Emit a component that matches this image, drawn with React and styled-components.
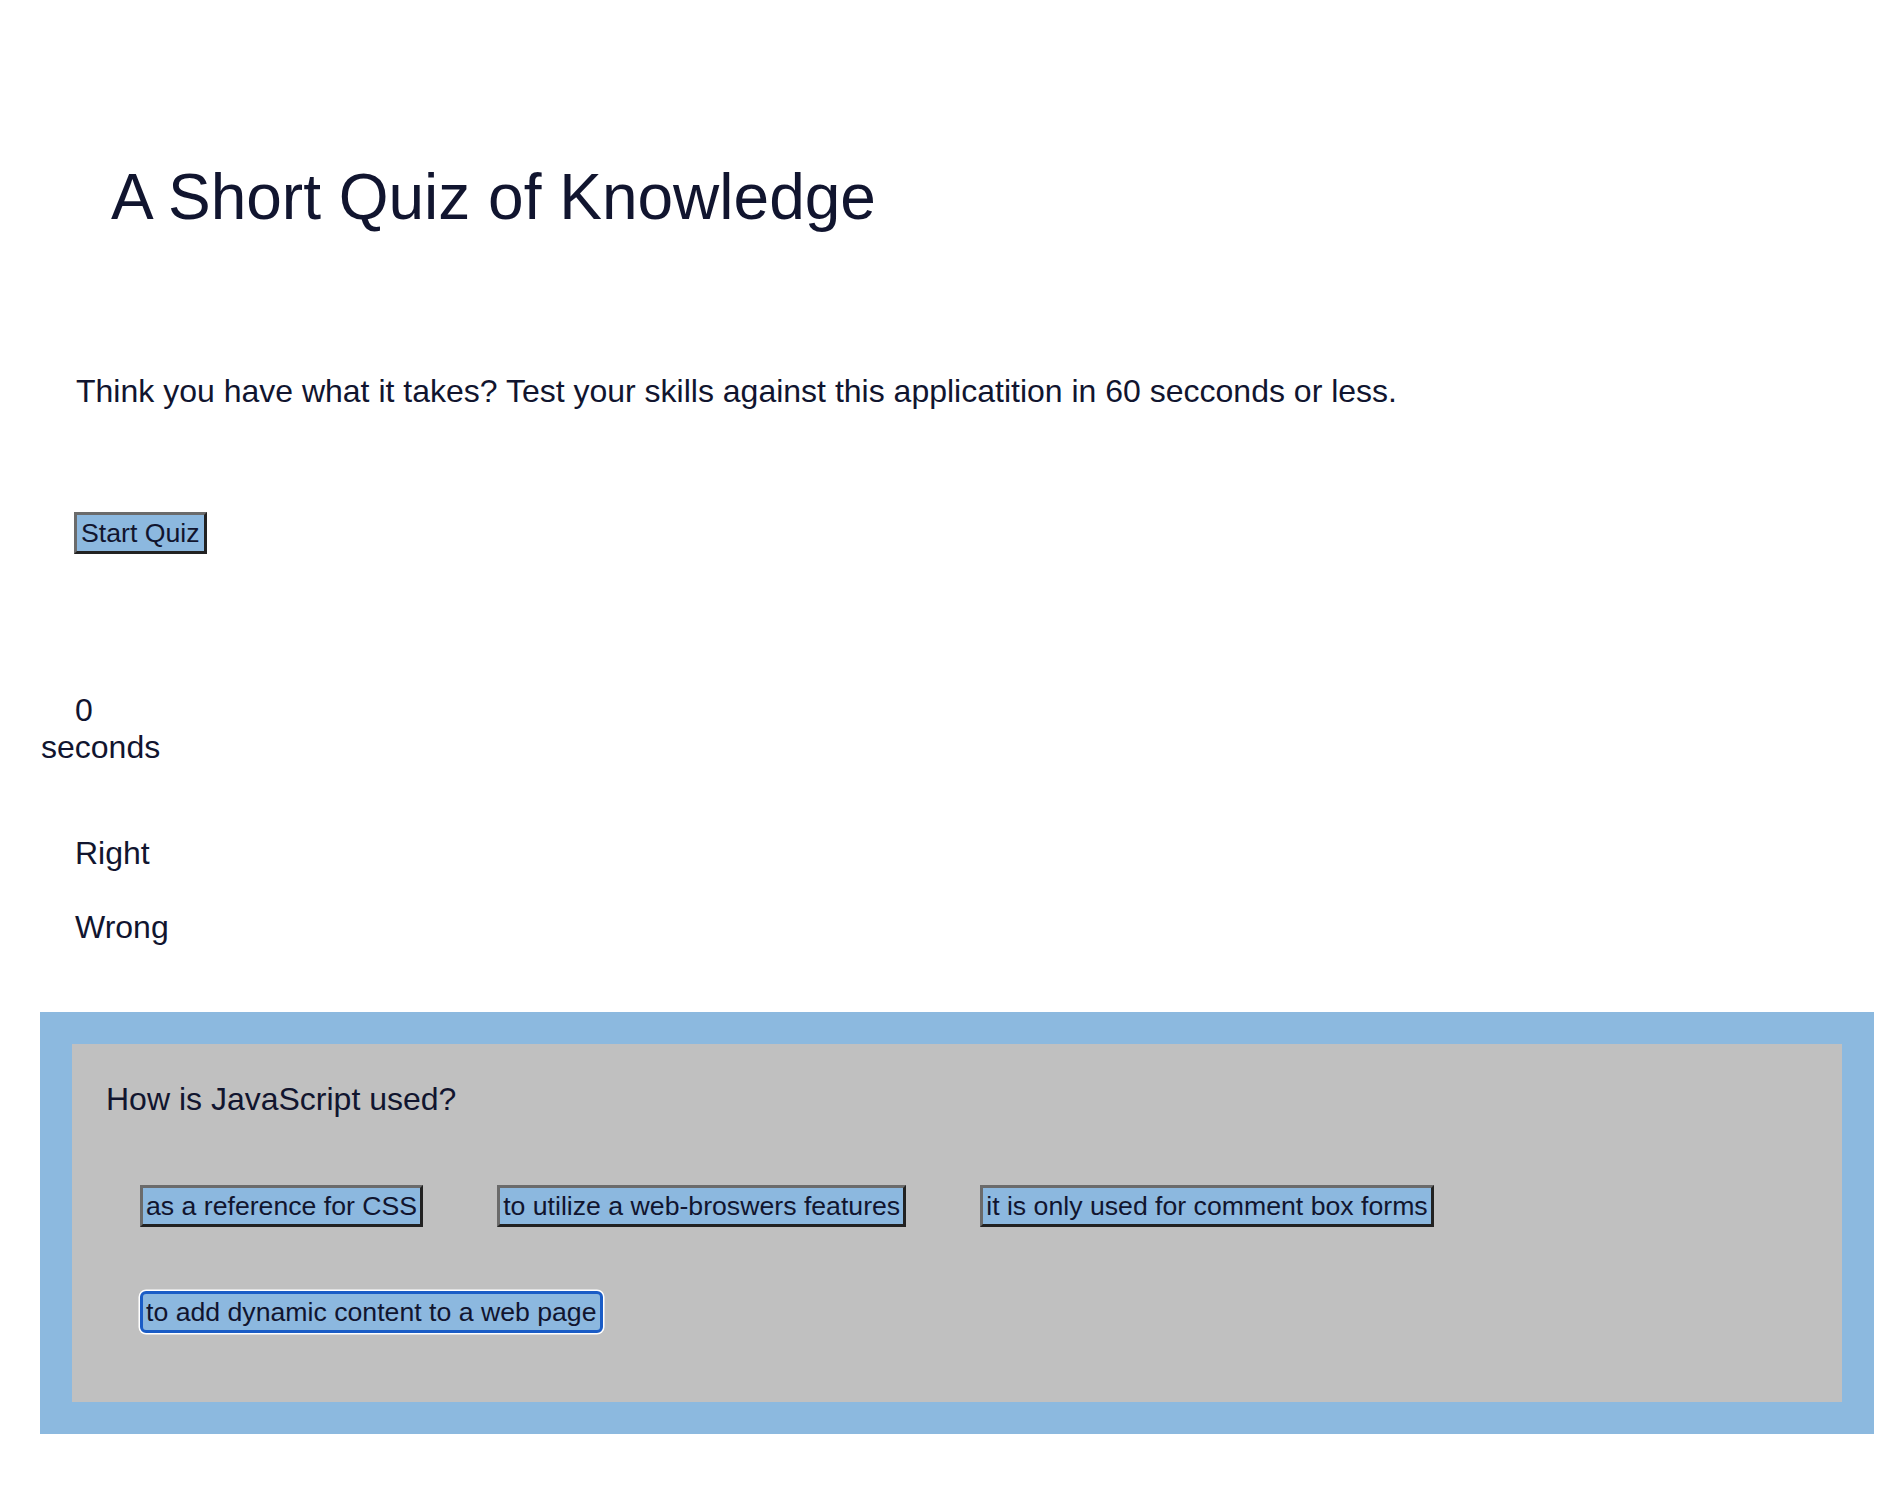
import React from 'react';
import styled, { createGlobalStyle } from 'styled-components';

const GlobalStyle = createGlobalStyle`
body{
  margin:0;
  background:#fff;
  font-family:"Liberation Sans", Arial, sans-serif;
  color:#11152f;
}
`;

const Page = styled.div`
display:flex;
flex-direction:column;
align-items:flex-start;
padding-bottom:77px;
`;

const Title = styled.h1`
margin:160px 0 0 111px;
font-size:64px;
line-height:74px;
font-weight:normal;
`;

const Intro = styled.p`
margin:139px 0 0 76px;
font-size:32px;
line-height:36.8px;
`;

const QuizButton = styled.button`
font-family:inherit;
font-size:26.67px;
line-height:30px;
color:#11152f;
background:#8cb8df;
padding:3px 3px;
border:3px solid;
border-color:#6b6b6b #222 #222 #6b6b6b;
border-radius:0;
white-space:nowrap;
cursor:pointer;
${p => p.$focused && `
  border-color:#1a5cc6;
  border-width:3.5px;
  border-radius:6px;
  box-shadow:0 0 0 1.5px #fff;
`}
`;

const StartButton = styled(QuizButton)`
margin:102px 0 0 74px;
padding:3px 4px;
`;

const Timer = styled.div`
margin-top:138px;
font-size:32px;
line-height:36.8px;
`;

const TimerCount = styled.div`
padding-left:75px;
`;

const TimerUnit = styled.div`
padding-left:41px;
`;

const Score = styled.p`
margin:${p => p.$top}px 0 0 75px;
font-size:32px;
line-height:36.8px;
`;

const QuestionFrame = styled.section`
align-self:stretch;
margin:66px 26px 0 40px;
background:#8cb9df;
padding:32px;
`;

const QuestionCard = styled.div`
background:#c0c0c0;
padding:37.5px 34px 69px;
`;

const QuestionText = styled.h2`
margin:0;
font-size:32px;
line-height:36.8px;
font-weight:normal;
`;

const Choices = styled.div`
display:flex;
flex-wrap:wrap;
column-gap:74px;
row-gap:64px;
margin:66.7px 0 0 34px;
`;

const choices = [
  'as a reference for CSS',
  'to utilize a web-broswers features',
  'it is only used for comment box forms',
  'to add dynamic content to a web page',
];

export default function App()
{
  return(
    <>
      <GlobalStyle />
      <Page>
        <Title>A Short Quiz of Knowledge</Title>
        <Intro>Think you have what it takes? Test your skills against this applicatition in 60 secconds or less.</Intro>
        <StartButton>Start Quiz</StartButton>
        <Timer>
          <TimerCount>0</TimerCount>
          <TimerUnit>seconds</TimerUnit>
        </Timer>
        <Score $top={70}>Right</Score>
        <Score $top={36.7}>Wrong</Score>
        <QuestionFrame>
          <QuestionCard>
            <QuestionText>How is JavaScript used?</QuestionText>
            <Choices>
              {choices.map((c, i) => (
                <QuizButton key={c} $focused={i === 3}>{c}</QuizButton>
              ))}
            </Choices>
          </QuestionCard>
        </QuestionFrame>
      </Page>
    </>
  );
};
